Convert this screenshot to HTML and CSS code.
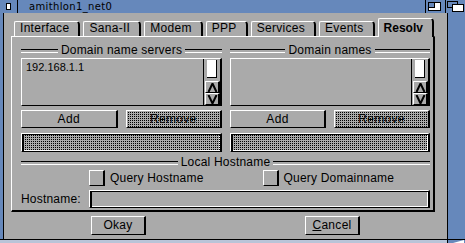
FILE: index.html
```html
<!DOCTYPE html>
<html>
<head>
	<meta charset="utf-8">
	<link rel="stylesheet" href="styles.css">
</head>
<body>
<div class="win">
	<div class="titlebar">
		<div class="close"><span></span></div>
		<div class="title">amithlon1_net0</div>
		<div class="gad">
			<svg width="19" height="13" viewBox="0 0 19 13">
				<rect x="2.5" y="2.5" width="12" height="8" fill="#fff" stroke="#000"/>
				<rect x="2.5" y="2.5" width="6" height="5" fill="#6688bb" stroke="#000"/>
			</svg>
		</div>
		<div class="gad">
			<svg width="19" height="13" viewBox="0 0 19 13">
				<rect x="1.5" y="1.5" width="10" height="6" fill="#6688bb" stroke="#000"/>
				<rect x="6.5" y="4.5" width="11" height="7" fill="#fff" stroke="#000"/>
			</svg>
		</div>
	</div>

	<div class="frame">
		<div class="lborder"></div>
		<div class="inner">
			<div class="tabs">
				<div class="tab">Interface</div>
				<div class="tab">Sana-II</div>
				<div class="tab">Modem</div>
				<div class="tab">PPP</div>
				<div class="tab">Services</div>
				<div class="tab">Events</div>
				<div class="tab active">Resolv</div>
			</div>

			<div class="panel">
				<div class="cols">
					<div class="col">
						<div class="hdr"><span>Domain name servers</span></div>
						<div class="listview">
							<div class="list">192.168.1.1</div>
							<div class="scroller">
								<div class="track"><div class="knob"></div></div>
								<div class="arrow">
									<svg width="11" height="9" viewBox="0 0 11 9"><path d="M1.5 9 L5.5 0.5 L9.5 9" fill="none" stroke="#000" stroke-width="2"/></svg>
								</div>
								<div class="arrow">
									<svg width="11" height="9" viewBox="0 0 11 9"><path d="M1.5 0 L5.5 8.5 L9.5 0" fill="none" stroke="#000" stroke-width="2"/></svg>
								</div>
							</div>
						</div>
						<div class="btns">
							<div class="btn">Add</div>
							<div class="btn ghost">Remove</div>
						</div>
						<div class="str ghost"></div>
					</div>

					<div class="col">
						<div class="hdr"><span>Domain names</span></div>
						<div class="listview">
							<div class="list"></div>
							<div class="scroller">
								<div class="track"><div class="knob"></div></div>
								<div class="arrow">
									<svg width="11" height="9" viewBox="0 0 11 9"><path d="M1.5 9 L5.5 0.5 L9.5 9" fill="none" stroke="#000" stroke-width="2"/></svg>
								</div>
								<div class="arrow">
									<svg width="11" height="9" viewBox="0 0 11 9"><path d="M1.5 0 L5.5 8.5 L9.5 0" fill="none" stroke="#000" stroke-width="2"/></svg>
								</div>
							</div>
						</div>
						<div class="btns">
							<div class="btn">Add</div>
							<div class="btn ghost">Remove</div>
						</div>
						<div class="str ghost"></div>
					</div>
				</div>

				<div class="hdr wide"><span>Local Hostname</span></div>
				<div class="checks">
					<div class="check"><div class="box"></div>Query Hostname</div>
					<div class="check"><div class="box"></div>Query Domainname</div>
				</div>
				<div class="hostrow">
					<span class="lbl">Hostname:</span>
					<div class="str"></div>
				</div>
			</div>

			<div class="actions">
				<div class="btn act">Okay</div>
				<div class="btn act"><u>C</u>ancel</div>
			</div>
		</div>
		<div class="rborder"></div>
	</div>

	<div class="bborder">
		<div class="sizer">
			<svg width="17" height="3" viewBox="0 0 17 3"><polygon points="5,3 16,3 16,0" fill="#fff"/></svg>
		</div>
	</div>
</div>
</body>
</html>
```

FILE: styles.css
```css
* {
	box-sizing: border-box;
}

body {
	margin: 0;
	background: #aaaaaa;
	font-family: "Liberation Sans", Arial, sans-serif;
	font-size: 12px;
	color: #000;
}

.win {
	width: 465px;
	height: 243px;
	display: flex;
	flex-direction: column;
	overflow: hidden;
}

/* title bar */
.titlebar {
	height: 13px;
	flex: none;
	display: flex;
	background: #6688bb;
}
.close {
	width: 18px;
	border-right: 1px solid #000;
	display: flex;
	align-items: center;
	justify-content: center;
}
.close span {
	width: 5px;
	height: 7px;
	background: #fff;
	border: 1px solid #000;
}
.title {
	flex: 1;
	margin-left: 11px;
	font-family: "DejaVu Sans", sans-serif;
	font-size: 10px;
	letter-spacing: 0.35px;
	line-height: 13px;
}
.gad {
	width: 20px;
	border-left: 1px solid #000;
}
.gad svg {
	display: block;
}

/* window borders */
.frame {
	flex: 1;
	display: flex;
}
.lborder {
	width: 4px;
	background: #6688bb;
	border-right: 1px solid #000;
}
.rborder {
	width: 18px;
	background: #6688bb;
	border-left: 1px solid #000;
}
.inner {
	flex: 1;
	display: flex;
	flex-direction: column;
}
.bborder {
	height: 4px;
	flex: none;
	display: flex;
	justify-content: flex-end;
	background: #b9c4d8;
	border-top: 1px solid #000;
}
.sizer {
	width: 18px;
	background: #6688bb;
	border-left: 1px solid #000;
}
.sizer svg {
	display: block;
}

/* register tabs */
.tabs {
	display: flex;
	align-items: flex-end;
	gap: 3px;
	height: 18px;
	margin: 5px 0 0 10px;
}
.tab {
	height: 15px;
	line-height: 13px;
	padding: 0 9px 0 5px;
	border-top: 1px solid #fff;
	border-left: 1px solid #fff;
	border-right: 2px solid #000;
	border-radius: 2px 4px 0 0;
	letter-spacing: 0.3px;
}
.tab.active {
	height: 19px;
	padding-top: 3px;
	margin-bottom: -1px;
	font-weight: bold;
	letter-spacing: 0;
	background: #aaaaaa;
	position: relative;
	z-index: 1;
}

.panel {
	width: 424px;
	height: 176px;
	margin-left: 7px;
	padding: 0 3px 0 9px;
	border-style: solid;
	border-width: 1px 2px 2px 1px;
	border-color: #fff #000 #000 #fff;
	display: flex;
	flex-direction: column;
}

.cols {
	display: flex;
	gap: 8px;
}
.col {
	width: 201px;
	display: flex;
	flex-direction: column;
}
.col + .col {
	width: 200px;
}

/* group title with lines */
.hdr {
	display: flex;
	align-items: center;
	gap: 3px;
	height: 13px;
	line-height: 13px;
	margin-top: 7px;
	letter-spacing: 0.2px;
}
.hdr::before,
.hdr::after {
	content: "";
	flex: 1;
	height: 2px;
	border-top: 1px solid #000;
	border-bottom: 1px solid #fff;
}
.hdr.wide {
	margin-top: 4px;
}

/* list + scroller */
.listview {
	display: flex;
	height: 48px;
	margin-top: 1px;
	border-style: solid;
	border-width: 1px 2px 1px 1px;
	border-color: #fff #000 #000 #fff;
}
.list {
	flex: 1;
	padding: 2px 4px;
	font-size: 11px;
	line-height: 12px;
	border-right: 1px solid #000;
}
.scroller {
	width: 16px;
	display: flex;
	flex-direction: column;
	padding-left: 1px;
}
.track {
	flex: 1;
	padding: 1px 0 0 2px;
}
.knob {
	width: 10px;
	height: 18px;
	background: #fff;
	border-right: 1px solid #000;
	border-bottom: 1px solid #000;
}
.arrow {
	height: 12px;
	display: flex;
	align-items: center;
	justify-content: center;
	border-style: solid;
	border-width: 1px 2px 1px 1px;
	border-color: #fff #000 #000 #fff;
}
.arrow svg {
	display: block;
}

/* buttons */
.btns {
	display: flex;
	gap: 8px;
	height: 18px;
	margin-top: 4px;
}
.btn {
	flex: 1;
	text-align: center;
	line-height: 16px;
	letter-spacing: 0.3px;
	border-style: solid;
	border-width: 1px 2px 1px 1px;
	border-color: #fff #000 #000 #fff;
}
.ghost {
	position: relative;
}
.ghost::after {
	content: "";
	position: absolute;
	inset: 0;
	background: conic-gradient(from 90deg at 1px 1px, #000 25%, transparent 0) 0 0 / 2px 2px;
}

/* string gadgets */
.str {
	height: 19px;
	margin-top: 5px;
	border-style: solid;
	border-width: 1px 2px 1px 1px;
	border-color: #fff #000 #000 #fff;
	box-shadow: inset 2px 1px #000, inset -1px -1px #fff;
}

.checks {
	display: flex;
	gap: 6px;
	height: 16px;
	margin-top: 1px;
	padding-left: 68px;
}
.check {
	flex: 1;
	display: flex;
	align-items: center;
	gap: 5px;
	letter-spacing: 0.2px;
}
.box {
	width: 16px;
	height: 16px;
	border-style: solid;
	border-width: 1px 2px 1px 1px;
	border-color: #fff #000 #000 #fff;
}

.hostrow {
	display: flex;
	height: 18px;
	margin-top: 4px;
	line-height: 18px;
}
.lbl {
	width: 68px;
	letter-spacing: 0.2px;
}
.hostrow .str {
	flex: 1;
	height: 18px;
	margin-top: 0;
}

.actions {
	display: flex;
	gap: 159px;
	margin-top: 4px;
	padding-left: 87px;
}
.act {
	flex: none;
	width: 55px;
	height: 19px;
	line-height: 17px;
}
```
